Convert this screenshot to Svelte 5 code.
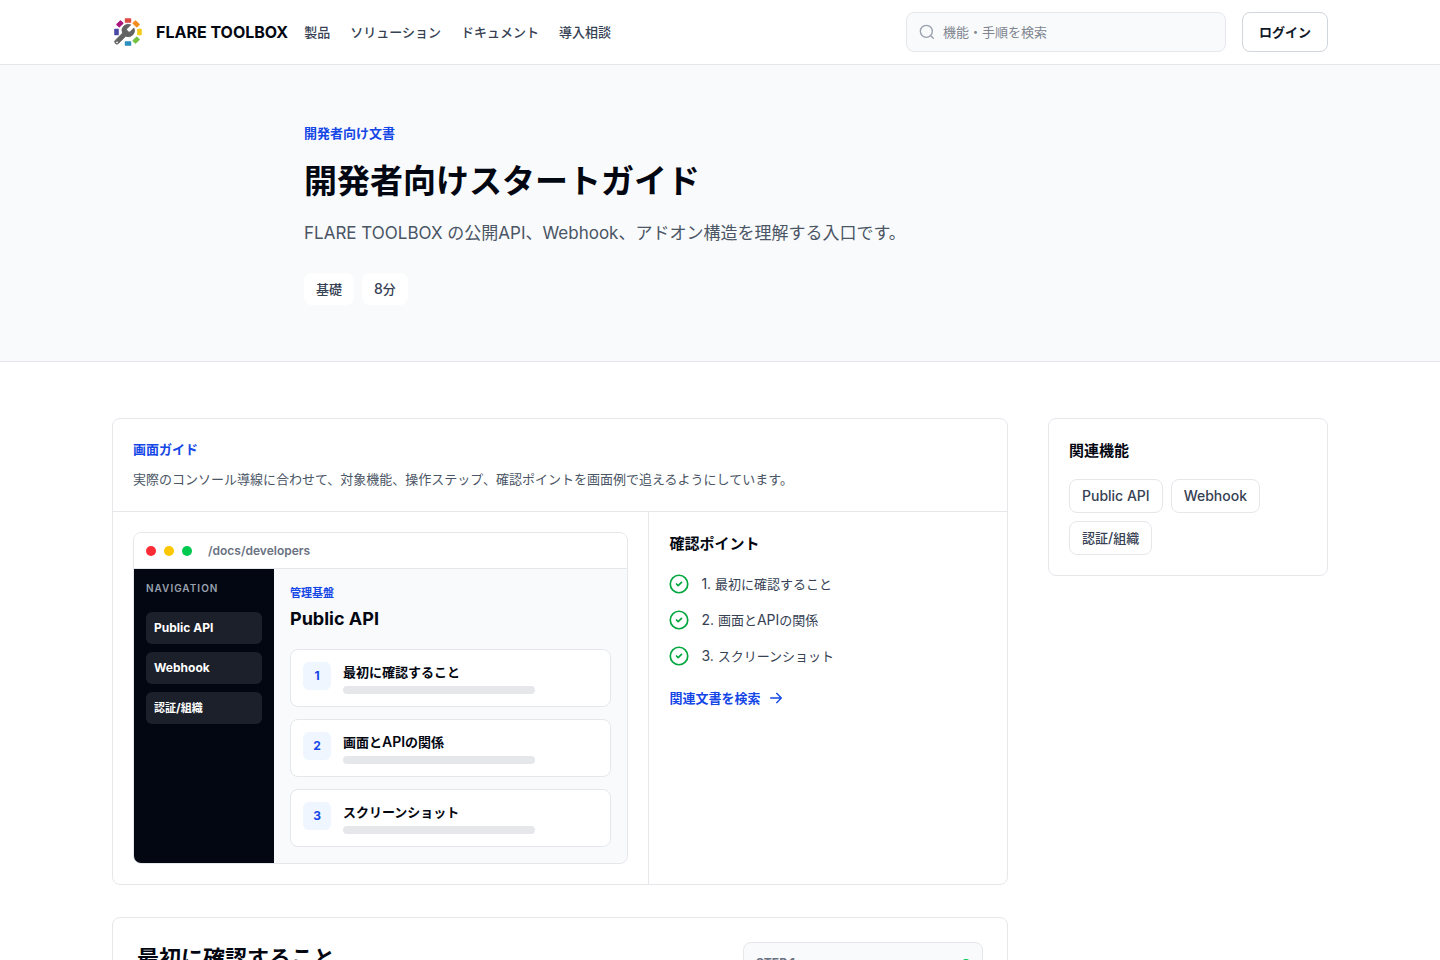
<script>
  const navLinks = ['製品', 'ソリューション', 'ドキュメント', '導入相談'];
  const features = ['Public API', 'Webhook', '認証/組織'];
  const steps = ['最初に確認すること', '画面とAPIの関係', 'スクリーンショット'];
  const segments = [
    { angle: 0, color: '#db4c43' },
    { angle: 45, color: '#f28c1c' },
    { angle: 90, color: '#f7cb15' },
    { angle: 135, color: '#76c043' },
    { angle: 180, color: '#2a8fbd' },
    { angle: 270, color: '#4a4aa5' },
    { angle: 315, color: '#ab1580' }
  ];

  // Splits text into Latin and Japanese runs so each gets its own optical size.
  const runs = (text) =>
    text
      .split(/([\u3000-\u9fff\uff00-\uffef]+)/)
      .filter(Boolean)
      .map((value) => ({ value, ja: /[\u3000-\u9fff\uff00-\uffef]/.test(value) }));
</script>

{#snippet mixed(text)}{#each runs(text) as run}{#if run.ja}<span class="ja">{run.value}</span>{:else}{run.value}{/if}{/each}{/snippet}

<header class="site-header">
  <div class="bar">
    <a class="brand" href="#top">
      <svg width="32" height="32" viewBox="0 0 32 32" aria-hidden="true">
        {#each segments as s}
          <rect x="12.8" y="2.2" width="6.4" height="4.6" rx="0.6" fill={s.color} transform="rotate({s.angle} 16 16)" />
        {/each}
        <path transform="translate(-0.4 6.2) scale(1.04)" d="M14.7 6.300a1 1 0 0 0 0 1.400l1.600 1.600a1 1 0 0 0 1.400 0l3.770-3.770a6 6 0 0 1-7.940 7.940l-6.910 6.910a2.120 2.120 0 0 1-3-3l6.910-6.910a6 6 0 0 1 7.940-7.940l-3.760 3.760z" fill="#636363" stroke="#636363" stroke-width="0.800" stroke-linejoin="round" />
        <circle cx="5" cy="26.300" r="0.900" fill="#fff" />
      </svg>
      <span>FLARE TOOLBOX</span>
    </a>
    <nav aria-label="メイン">
      {#each navLinks as link}<a href="#top">{link}</a>{/each}
    </nav>
    <label class="search">
      <svg class="icon" width="16" height="16" viewBox="0 0 24 24" aria-hidden="true"><circle cx="11" cy="11" r="9" /><path d="m21.500 21.500-4-4" /></svg>
      <input type="search" placeholder="機能・手順を検索" aria-label="機能・手順を検索" />
    </label>
    <button class="login" type="button">ログイン</button>
  </div>
</header>

<section class="hero" id="top">
  <div class="hero-inner">
    <p class="eyebrow">開発者向け文書</p>
    <h1>開発者向けスタートガイド</h1>
    <p class="lead">FLARE TOOLBOX の公開API、Webhook、アドオン構造を理解する入口です。</p>
    <div class="tags"><span>{@render mixed('基礎')}</span><span>{@render mixed('8分')}</span></div>
  </div>
</section>

<main class="content">
  <div class="column">
    <section class="card">
      <div class="card-head">
        <h2 class="guide-title">画面ガイド</h2>
        <p>実際のコンソール導線に合わせて、対象機能、操作ステップ、確認ポイントを画面例で追えるようにしています。</p>
      </div>
      <div class="card-body">
        <div class="preview">
          <div class="mock">
            <div class="mock-bar">
              <i class="red"></i><i class="yellow"></i><i class="green"></i>
              <span>/docs/developers</span>
            </div>
            <div class="mock-body">
              <div class="mock-nav">
                <p>NAVIGATION</p>
                {#each features as f}<div class="mock-link">{@render mixed(f)}</div>{/each}
              </div>
              <div class="mock-main">
                <p class="mock-eyebrow">管理基盤</p>
                <h3>Public API</h3>
                <ol>
                  {#each steps as step, i}
                    <li>
                      <span class="num">{i + 1}</span>
                      <div class="step">
                        <p>{@render mixed(step)}</p>
                        <div class="line"></div>
                      </div>
                    </li>
                  {/each}
                </ol>
              </div>
            </div>
          </div>
        </div>
        <div class="points">
          <h3>確認ポイント</h3>
          <ul>
            {#each steps as step, i}
              <li>
                <svg class="icon" width="20" height="20" viewBox="0 0 24 24" aria-hidden="true"><circle cx="12" cy="12" r="10.500" /><path d="m9 12 2 2 4-4" /></svg>
                <span>{@render mixed(`${i + 1}. ${step}`)}</span>
              </li>
            {/each}
          </ul>
          <a class="more" href="#top">
            関連文書を検索
            <svg class="icon" width="16" height="16" viewBox="0 0 24 24" aria-hidden="true"><path d="M4 12h16M13 5l7 7-7 7" /></svg>
          </a>
        </div>
      </div>
    </section>

    <section class="card article">
      <h2>最初に確認すること</h2>
      <div class="step-card">
        <span>STEP 1</span>
        <i class="status green"></i>
      </div>
    </section>
  </div>

  <aside class="card related">
    <h2>関連機能</h2>
    <div class="chips">
      {#each features as f}<a href="#top">{@render mixed(f)}</a>{/each}
    </div>
  </aside>
</main>

<style>
  :global(body) {
    margin: 0;
    background: #fff;
    color: #030712;
    font-family: Inter, 'Noto Sans CJK JP', sans-serif;
    font-size: 14px;
    line-height: 20px;
    -webkit-font-smoothing: antialiased;
  }
  h1, h2, h3, p, ol, ul { margin: 0; padding: 0; }
  ol, ul { list-style: none; }
  a { color: inherit; text-decoration: none; }
  .ja { font-size: var(--ja, 13px); }
  .icon {
    flex: none;
    fill: none;
    stroke: currentColor;
    stroke-width: 2;
    stroke-linecap: round;
    stroke-linejoin: round;
  }

  .site-header { border-bottom: 1px solid #e5e7eb; background: #fff; }
  .bar {
    display: flex;
    align-items: center;
    gap: 16px;
    max-width: 1216px;
    height: 64px;
    margin: 0 auto;
    padding: 0 32px;
  }
  .brand {
    display: flex;
    align-items: center;
    gap: 12px;
    font-size: 16px;
    font-weight: 700;
    white-space: nowrap;
  }
  nav {
    display: flex;
    gap: 20px;
    color: #364153;
    font-size: 13px;
    font-weight: 500;
    white-space: nowrap;
  }
  .search {
    box-sizing: border-box;
    display: flex;
    align-items: center;
    gap: 8px;
    width: 320px;
    height: 40px;
    margin-left: auto;
    padding: 0 12px;
    border: 1px solid #e5e7eb;
    border-radius: 8px;
    background: #f9fafb;
    color: #99a1af;
  }
  .search input {
    flex: 1;
    min-width: 0;
    padding: 0;
    border: 0;
    outline: 0;
    background: none;
    color: #030712;
    font: inherit;
    font-size: 13px;
  }
  .search input::placeholder { color: #808590; }
  .login {
    height: 40px;
    padding: 0 16px;
    border: 1px solid #d1d5dc;
    border-radius: 8px;
    background: #fff;
    color: #101828;
    font: inherit;
    font-size: 13px;
    font-weight: 600;
    white-space: nowrap;
  }

  .hero { border-bottom: 1px solid #e5e7eb; background: #f9fafb; }
  .hero-inner { max-width: 832px; margin: 0 auto; padding: 56px 32px; }
  .eyebrow { color: #1447e6; font-size: 13px; line-height: 24px; font-weight: 600; }
  h1 { margin-top: 16px; font-size: 33px; line-height: 40px; font-weight: 700; }
  .lead {
    margin-top: 16px;
    color: #4a5565;
    font-size: 17px;
    line-height: 32px;
  }
  .tags { display: flex; gap: 8px; margin-top: 24px; }
  .tags span:not(.ja) {
    padding: 6px 12px;
    border-radius: 8px;
    background: #fff;
    color: #364153;
    font-weight: 500;
  }

  .content {
    display: grid;
    grid-template-columns: minmax(0, 1fr) 280px;
    align-items: start;
    gap: 40px;
    max-width: 1216px;
    margin: 0 auto;
    padding: 56px 32px;
  }
  .column { display: grid; gap: 32px; }
  .card { border: 1px solid #e5e7eb; border-radius: 8px; background: #fff; }
  .card-head { padding: 20px; border-bottom: 1px solid #e5e7eb; font-size: 13px; }
  .guide-title { color: #1447e6; font-size: 13px; font-weight: 600; }
  .card-head p { margin-top: 8px; color: #4a5565; line-height: 24px; }
  .card-body { display: grid; grid-template-columns: 3fr 2fr; }
  .preview { padding: 20px; border-right: 1px solid #e5e7eb; }

  .mock {
    overflow: hidden;
    border: 1px solid #e5e7eb;
    border-radius: 8px;
    background: #f9fafb;
  }
  .mock-bar {
    box-sizing: border-box;
    display: flex;
    align-items: center;
    gap: 8px;
    height: 36px;
    padding: 0 12px;
    border-bottom: 1px solid #e5e7eb;
    background: #fff;
  }
  .mock-bar i { width: 10px; height: 10px; border-radius: 50%; }
  .red { background: #fb2c36; }
  .yellow { background: #fdc700; }
  .green { background: #00c950; }
  .mock-bar span { margin-left: 8px; color: #6a7282; font-size: 12px; font-weight: 600; }
  .mock-body { display: grid; grid-template-columns: 140px minmax(0, 1fr); }
  .mock-nav {
    display: flex;
    flex-direction: column;
    gap: 8px;
    padding: 12px;
    background: #030712;
    color: #fff;
  }
  .mock-nav p {
    margin-bottom: 8px;
    color: #99a1af;
    font-size: 10px;
    line-height: 15px;
    font-weight: 600;
    letter-spacing: 1px;
  }
  .mock-link {
    --ja: 11px;
    padding: 8px;
    border-radius: 6px;
    background: rgb(255 255 255 / 0.1);
    font-size: 12px;
    line-height: 16px;
    font-weight: 700;
  }
  .mock-main { padding: 16px; }
  .mock-eyebrow { color: #1447e6; font-size: 11px; line-height: 16px; font-weight: 600; }
  .mock-main h3 { margin-top: 4px; font-size: 18px; line-height: 28px; font-weight: 700; }
  ol { display: grid; gap: 12px; margin-top: 16px; }
  ol li {
    display: flex;
    gap: 12px;
    padding: 12px;
    border: 1px solid #e5e7eb;
    border-radius: 8px;
    background: #fff;
  }
  .num {
    flex: none;
    width: 28px;
    height: 28px;
    border-radius: 6px;
    background: #eff6ff;
    color: #1447e6;
    font-size: 12px;
    line-height: 28px;
    font-weight: 700;
    text-align: center;
  }
  .step { flex: 1; min-width: 0; }
  .step p { height: 20px; font-weight: 600; }
  .line { width: 75%; height: 8px; margin-top: 4px; border-radius: 4px; background: #e5e7eb; }

  .points { padding: 20px; }
  .points h3, .related h2 { font-size: 15px; line-height: 24px; font-weight: 700; }
  ul { display: grid; gap: 12px; margin-top: 16px; }
  ul li {
    display: flex;
    align-items: center;
    gap: 12px;
    height: 24px;
    color: #364153;
    line-height: 24px;
  }
  ul .icon { color: #00a63e; }
  .more {
    display: inline-flex;
    align-items: center;
    gap: 8px;
    margin-top: 20px;
    color: #1447e6;
    font-size: 13px;
    font-weight: 600;
  }

  .article {
    display: grid;
    grid-template-columns: minmax(0, 1fr) 240px;
    gap: 24px;
    padding: 24px;
  }
  .article h2 { font-size: 22px; line-height: 32px; font-weight: 700; }
  .step-card {
    display: flex;
    justify-content: space-between;
    padding: 12px;
    border: 1px solid #e5e7eb;
    border-radius: 8px;
    background: #f9fafb;
    color: #6a7282;
    font-size: 12px;
    line-height: 16px;
    font-weight: 700;
  }
  .status { width: 8px; height: 8px; margin: 4px 0; border-radius: 50%; }

  .related { padding: 20px; }
  .chips { display: flex; flex-wrap: wrap; gap: 8px; margin-top: 16px; }
  .chips a {
    height: 20px;
    padding: 6px 12px;
    border: 1px solid #e5e7eb;
    border-radius: 8px;
    color: #364153;
    font-weight: 500;
  }
</style>
